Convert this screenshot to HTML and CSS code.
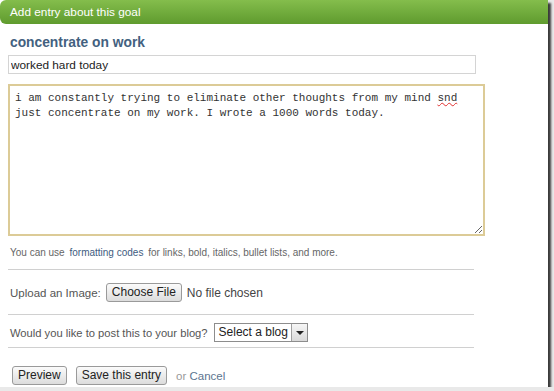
FILE: index.html
```html
<!DOCTYPE html>
<html lang="en">
<head>
    <meta charset="UTF-8">
    <title>Add entry about this goal</title>
    <link rel="stylesheet" href="styles.css">
</head>
<body>
<div class="page">
    <div class="header">Add entry about this goal</div>

    <div class="content">
        <h2 class="goal-title">concentrate on work</h2>

        <input class="entry-title" type="text" value="worked hard today">

        <div class="entry-body">i am constantly trying to eliminate other thoughts from my mind <span class="typo">snd</span> just concentrate on my work. I wrote a 1000 words today.</div>

        <div class="help">You can use <a href="#">formatting codes</a> for links, bold, italics, bullet lists, and more.</div>

        <div class="rule"></div>

        <div class="row upload-row">
            <span class="label">Upload an Image:</span>
            <span class="btn">Choose File</span>
            <span class="file-name">No file chosen</span>
        </div>

        <div class="rule rule-upload"></div>

        <div class="row blog-row">
            <span class="label">Would you like to post this to your blog?</span>
            <span class="select">
                <span class="select-text">Select a blog</span>
                <span class="select-arrow"></span>
            </span>
        </div>

        <div class="rule rule-blog"></div>

        <div class="row actions">
            <span class="btn">Preview</span>
            <span class="btn">Save this entry</span>
            <span class="or">or <a href="#">Cancel</a></span>
        </div>
    </div>
</div>
</body>
</html>
```

FILE: styles.css
```css
body {
    margin: 0;
    background: #e9e9e9;
    font-family: 'Liberation Sans', Arial, sans-serif;
    color: #555;
}

.page {
    width: 548px;
    height: 387px;
    background: white;
    box-shadow: 3px 3px 2px rgba(0, 0, 0, 0.75);
    overflow: hidden;
}

.header {
    height: 24px;
    line-height: 24px;
    padding-left: 10px;
    background: linear-gradient(#84bd4c, #5f9b2e);
    border-radius: 6px 0 0 6px;
    color: white;
    font-size: 11.8px;
}

.content {
    padding-left: 8px;
}

.goal-title {
    margin: 10px 0 0 2px;
    font-size: 13.8px;
    line-height: 17px;
    color: #436180;
}

.entry-title {
    display: block;
    box-sizing: border-box;
    width: 468px;
    height: 19px;
    margin: 4px 0 0;
    padding: 0 2px;
    border: 1px solid #d4d4d4;
    font-family: 'Liberation Sans', Arial, sans-serif;
    font-size: 11.8px;
    color: #222;
    outline: none;
}

.entry-body {
    box-sizing: border-box;
    width: 477px;
    height: 152px;
    margin: 10px 0 0;
    padding: 5px 5px;
    border: 2px solid #dccb97;
    font-family: 'Liberation Mono', 'Courier New', monospace;
    font-size: 11px;
    line-height: 15px;
    color: #333;
    resize: both;
    overflow: auto;
}

.typo {
    text-decoration: underline wavy #e03030;
    text-decoration-thickness: 1px;
}

.help {
    margin-top: 9px;
    line-height: 16px;
    font-size: 10px;
    color: #666;
    padding-left: 2px;
}

.help a {
    color: #3e5c80;
    text-decoration: none;
    margin: 0 2px;
}

.rule {
    width: 466px;
    height: 1px;
    margin-top: 8px;
    background: #d0d0d0;
}

.row {
    display: flex;
    align-items: center;
    height: 19px;
    padding-left: 2px;
}

.upload-row {
    margin-top: 13px;
    font-size: 11.5px;
}

.rule-upload {
    margin-top: 12px;
}

.blog-row {
    margin-top: 8px;
    font-size: 11.2px;
}

.blog-row .label {
    margin-right: 6px;
}

.rule-blog {
    margin-top: 5px;
}

.actions {
    margin-top: 18px;
    padding-left: 4px;
}

.label {
    margin-right: 5px;
}

.btn {
    box-sizing: border-box;
    height: 19px;
    line-height: 17px;
    padding: 0 5px;
    border: 1px solid #9a9a9a;
    border-radius: 3px;
    background: linear-gradient(#fbfbfb, #dcdcdc);
    color: #222;
    font-size: 12px;
}

.upload-row .btn {
    margin-right: 5px;
}

.actions .btn {
    margin-right: 9px;
}

.file-name {
    font-size: 12px;
    color: #444;
}

.select {
    display: flex;
    box-sizing: border-box;
    height: 19px;
    border: 1px solid #8d8d8d;
    background: white;
}

.select-text {
    padding: 0 3px 0 4px;
    line-height: 17px;
    font-size: 12px;
    color: #222;
}

.select-arrow {
    position: relative;
    width: 15px;
    border-left: 1px solid #a0a0a0;
    background: linear-gradient(#f6f6f6, #d9d9d9);
}

.select-arrow::after {
    content: "";
    position: absolute;
    left: 4px;
    top: 7px;
    border-left: 4px solid transparent;
    border-right: 4px solid transparent;
    border-top: 4px solid #222;
}

.or {
    font-size: 11.5px;
    color: #999;
}

.or a {
    color: #5c7590;
    text-decoration: none;
}
```
